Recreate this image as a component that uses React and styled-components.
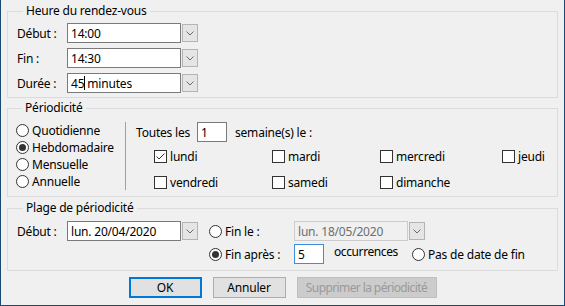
import React from "react";
import styled, { createGlobalStyle } from "styled-components";

const GlobalStyle = createGlobalStyle`
  html, body {
    margin: 0;
    padding: 0;
    background: #ffffff;
  }
  body {
    font-family: "Noto Sans", "Open Sans", sans-serif;
    font-size: 12px;
    letter-spacing: -0.2px;
    color: #000000;
  }
  * {
    box-sizing: border-box;
  }
`;

const Window = styled.div`
  width: 565px;
  height: 306px;
  background: #f0f0f0;
  border: 1px solid #1a4a74;
  border-top: none;
  padding: 4px 6px 0;
  display: flex;
  flex-direction: column;
`;

const Group = styled.fieldset`
  margin: ${(p) => p.$mt || 0}px 0 0;
  padding: ${(p) => p.$pad};
  border: 1px solid #dcdcdc;
  min-width: 0;
`;

const Legend = styled.legend`
  margin-left: 6px;
  padding: 0 3px;
  line-height: 14px;
`;

const Rows = styled.div`
  display: flex;
  flex-direction: column;
  gap: ${(p) => p.$gap}px;
`;

const Row = styled.div`
  display: flex;
  align-items: center;
  height: 20px;
`;

const Label = styled.span`
  width: ${(p) => p.$w}px;
  flex-shrink: 0;
  white-space: nowrap;
`;

const TextBox = styled.div`
  width: ${(p) => p.$w}px;
  height: 20px;
  flex-shrink: 0;
  display: flex;
  align-items: center;
  padding-left: 3px;
  background: ${(p) => (p.$disabled ? "#f0f0f0" : "#ffffff")};
  border: 1px solid ${(p) => (p.$disabled ? "#cccccc" : p.$focus ? "#3c8fdc" : "#7a7a7a")};
  color: ${(p) => (p.$disabled ? "#6d6d6d" : "#000000")};
  white-space: nowrap;
`;

const Caret = styled.span`
  display: inline-block;
  width: 1px;
  height: 14px;
  background: #000000;
  margin: 0 2px 0 0;
`;

const DropBtn = styled.div`
  width: 16px;
  height: 18px;
  margin-left: 1px;
  flex-shrink: 0;
  display: flex;
  align-items: center;
  justify-content: center;
  background: #e5e5e5;
  border: 1px solid #b4b4b4;
`;

const Chevron = () => (
  <svg width="8" height="5" viewBox="0 0 8 5">
    <polyline points="0.5,0.5 4,4 7.5,0.5" fill="none" stroke="#6a6a6a" strokeWidth="1" />
  </svg>
);

const Combo = ({ w, value, disabled, children }) => (
  <>
    <TextBox $w={w} $disabled={disabled}>
      {children || value}
    </TextBox>
    <DropBtn>
      <Chevron />
    </DropBtn>
  </>
);

const RadioCircle = styled.span`
  width: 13px;
  height: 13px;
  flex-shrink: 0;
  border: 1px solid #333333;
  border-radius: 50%;
  background: #ffffff;
  display: flex;
  align-items: center;
  justify-content: center;
  &::after {
    content: "";
    width: 7px;
    height: 7px;
    border-radius: 50%;
    background: ${(p) => (p.$on ? "#333333" : "transparent")};
  }
`;

const Option = styled.label`
  display: flex;
  align-items: center;
  gap: 3px;
  height: ${(p) => p.$h || 17}px;
  width: ${(p) => (p.$w ? `${p.$w}px` : "auto")};
  flex-shrink: 0;
  white-space: nowrap;
`;

const Radio = ({ on, children, w, h }) => (
  <Option $w={w} $h={h}>
    <RadioCircle $on={on} />
    {children}
  </Option>
);

const Box = styled.span`
  width: 13px;
  height: 13px;
  flex-shrink: 0;
  border: 1px solid #333333;
  background: #ffffff;
  display: flex;
`;

const Check = ({ on, children }) => (
  <Option $h={13}>
    <Box>
      {on && (
        <svg width="11" height="11" viewBox="0 0 11 11">
          <polyline points="1.5,5.5 4,8 9.5,2.5" fill="none" stroke="#333333" strokeWidth="1" />
        </svg>
      )}
    </Box>
    {children}
  </Option>
);

const PeriodBody = styled.div`
  display: flex;
`;

const RadioCol = styled.div`
  width: 109px;
  display: flex;
  flex-direction: column;
`;

const Divider = styled.div`
  width: 1px;
  background: #a0a0a0;
`;

const WeekPane = styled.div`
  padding-left: 10px;
  display: flex;
  flex-direction: column;
`;

const Days = styled.div`
  margin-top: 8px;
  padding-left: 18px;
  display: grid;
  grid-template-columns: 118px 108px 122px auto;
  grid-auto-rows: 13px;
  row-gap: 13px;
`;

const Spacer = styled.span`
  margin-left: ${(p) => p.$m}px;
  white-space: nowrap;
`;

const RangeBody = styled.div`
  display: flex;
  align-items: flex-start;
`;

const EndCol = styled.div`
  margin-left: 11px;
  display: flex;
  flex-direction: column;
  gap: 3px;
`;

const Occ = styled.span`
  width: 78px;
  margin-left: 10px;
  align-self: flex-start;
  line-height: 15px;
  letter-spacing: -0.4px;
`;

const Buttons = styled.div`
  margin-top: 6px;
  display: flex;
  justify-content: center;
  gap: 11px;
`;

const Button = styled.div`
  width: ${(p) => p.$w}px;
  height: 21px;
  display: flex;
  align-items: center;
  justify-content: center;
  background: ${(p) => (p.$disabled ? "#cccccc" : "#e1e1e1")};
  border: ${(p) => (p.$default ? "2px solid #0078d7" : p.$disabled ? "1px solid #bfbfbf" : "1px solid #adadad")};
  color: ${(p) => (p.$disabled ? "#9a9a9a" : "#000000")};
  letter-spacing: ${(p) => (p.$disabled ? "-0.6px" : "-0.2px")};
  white-space: nowrap;
`;

export default function App() {
  return (
    <>
      <GlobalStyle />
      <Window>
        <Group $pad="5px 0 4px 9px">
          <Legend>Heure du rendez-vous</Legend>
          <Rows $gap={5}>
            <Row>
              <Label $w={50}>Début :</Label>
              <Combo w={114} value="14:00" />
            </Row>
            <Row>
              <Label $w={50}>Fin :</Label>
              <Combo w={114} value="14:30" />
            </Row>
            <Row>
              <Label $w={50}>Durée :</Label>
              <Combo w={114}>
                45
                <Caret />
                minutes
              </Combo>
            </Row>
          </Rows>
        </Group>

        <Group $mt={3} $pad="7px 0 6px 8px">
          <Legend>Périodicité</Legend>
          <PeriodBody>
            <RadioCol>
              <Radio>Quotidienne</Radio>
              <Radio on>Hebdomadaire</Radio>
              <Radio>Mensuelle</Radio>
              <Radio>Annuelle</Radio>
            </RadioCol>
            <Divider />
            <WeekPane>
              <Row>
                <Label $w={61}>Toutes les</Label>
                <TextBox $w={30}>1</TextBox>
                <Spacer $m={8}>semaine(s) le :</Spacer>
              </Row>
              <Days>
                <Check on>lundi</Check>
                <Check>mardi</Check>
                <Check>mercredi</Check>
                <Check>jeudi</Check>
                <Check>vendredi</Check>
                <Check>samedi</Check>
                <Check>dimanche</Check>
              </Days>
            </WeekPane>
          </PeriodBody>
        </Group>

        <Group $mt={4} $pad="6px 0 6px 9px">
          <Legend>Plage de périodicité</Legend>
          <RangeBody>
            <Row>
              <Label $w={50}>Début :</Label>
              <Combo w={114} value="lun. 20/04/2020" />
            </Row>
            <EndCol>
              <Row>
                <Radio w={85} h={20}>Fin le :</Radio>
                <Combo w={114} value="lun. 18/05/2020" disabled />
              </Row>
              <Row>
                <Radio w={85} h={20} on>
                  Fin après :
                </Radio>
                <TextBox $w={30} $focus>
                  5
                </TextBox>
                <Occ>occurrences</Occ>
                <Radio h={20}>Pas de date de fin</Radio>
              </Row>
            </EndCol>
          </RangeBody>
        </Group>

        <Buttons>
          <Button $w={73} $default>
            OK
          </Button>
          <Button $w={73}>Annuler</Button>
          <Button $w={140} $disabled>
            Supprimer la périodicité
          </Button>
        </Buttons>
      </Window>
    </>
  );
}
